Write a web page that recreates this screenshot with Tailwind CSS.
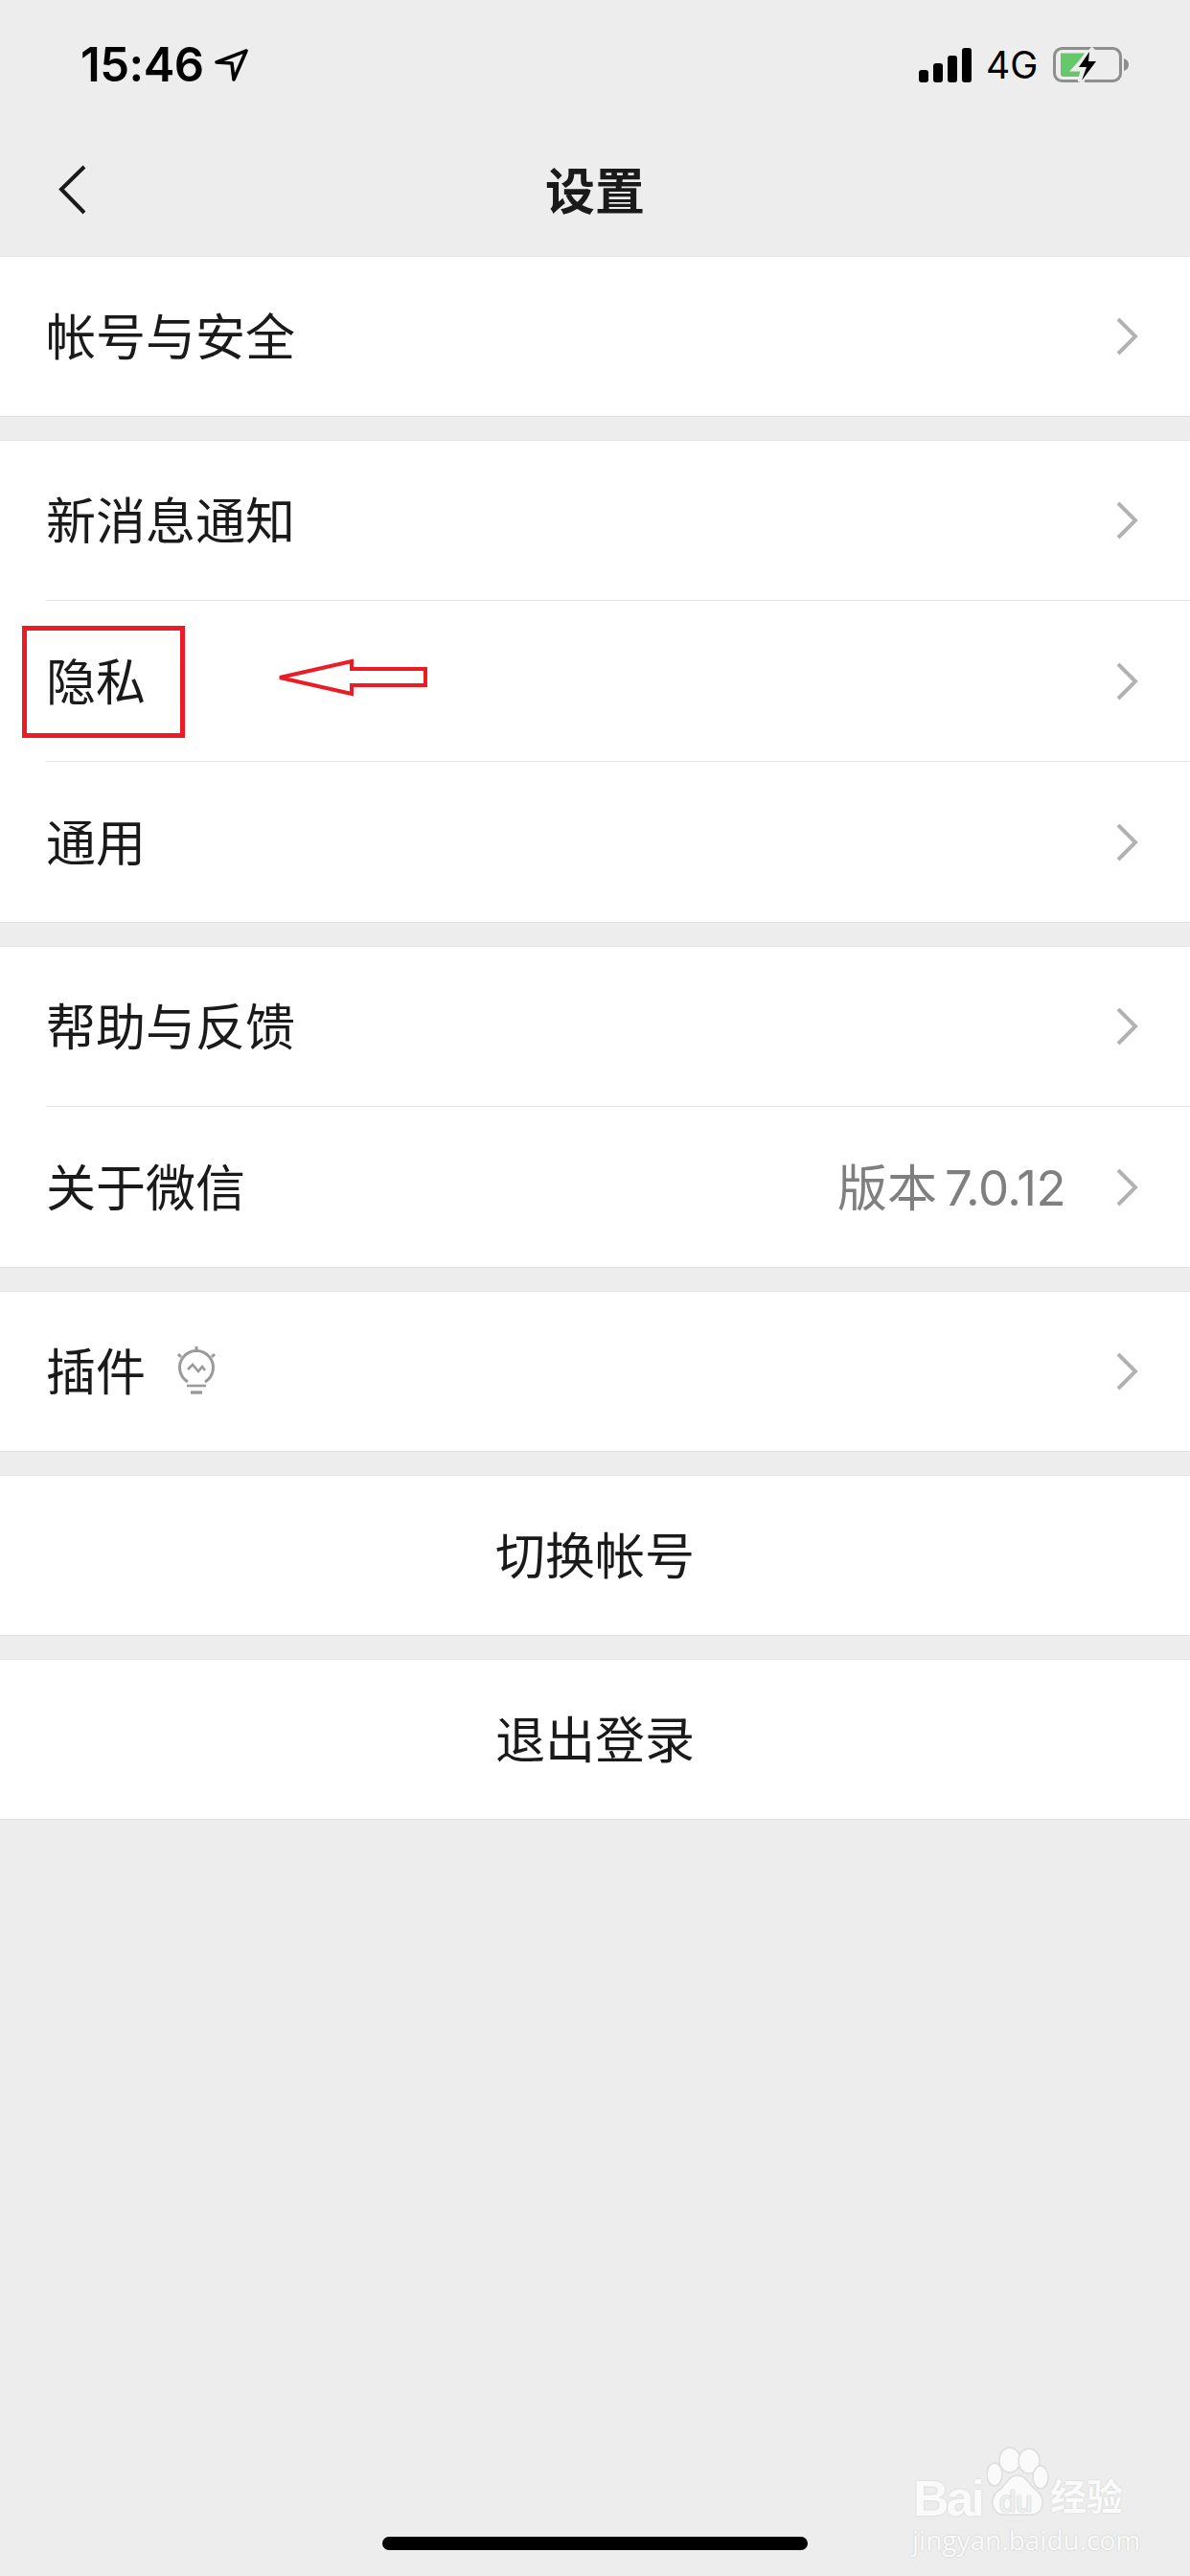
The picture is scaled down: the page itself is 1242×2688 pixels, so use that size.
<!DOCTYPE html>
<html lang="zh-CN">

<head>
    <meta charset="UTF-8">
    <meta name="viewport" content="width=device-width, initial-scale=1.0">
    <title>设置</title>
    <script src="https://cdn.jsdelivr.net/npm/@tailwindcss/browser@4"></script>
</head>

<body class="bg-[#ededed] text-[#1a1a1a] font-['Inter','Noto_Sans_CJK_SC',sans-serif]">
    <div class="relative w-[1242px] h-[2688px] overflow-hidden">

        <!-- Status bar -->
        <div class="h-[134px] flex items-start justify-between pt-[44px] pl-[84px] pr-[63px]">
            <div class="flex items-center gap-[11px] h-[48px]">
                <span class="text-[49px] leading-[48px] font-semibold text-black tracking-[-0.5px]">15:46</span>
                <svg class="w-[35px] h-[36px]" viewBox="0 0 35 36" fill="none" stroke="#000" stroke-width="3.6" stroke-linejoin="round">
                    <path d="M2 15 L33 3 L20 33 L18 16 Z" />
                </svg>
            </div>
            <div class="flex items-center h-[48px]">
                <svg class="w-[56px] h-[36px]" viewBox="0 0 56 36" fill="#000">
                    <rect x="0" y="23" width="10" height="13" rx="3" />
                    <rect x="15" y="16" width="10" height="20" rx="3" />
                    <rect x="30" y="8" width="10" height="28" rx="3" />
                    <rect x="45" y="0" width="10" height="36" rx="3" />
                </svg>
                <span class="ml-[14px] w-[54px] text-[39px] leading-[48px] text-black">4G</span>
                <svg class="ml-[16px] w-[80px] h-[38px]" viewBox="0 0 80 38" fill="none">
                    <rect x="1.5" y="1.5" width="69" height="34" rx="8" stroke="#8e8e8e" stroke-width="3" />
                    <path d="M74 12 C77 13 79 15 79 18.500 C79 22 77 24 74 25 Z" fill="#8e8e8e" />
                    <path d="M8 6.500 H33 L22 22 H30 L28 31 H11 Q8 31 8 28 Z" fill="#65c86a" />
                    <path d="M43 2 L25 22 H33 L29 37" stroke="#ededed" stroke-width="7" />
                    <path d="M38 5 L27 21 H35 L30 35 L45 15 H37 Z" fill="#000" />
                </svg>
            </div>
        </div>

        <!-- Nav bar -->
        <div class="relative h-[134px] flex items-center justify-center border-b border-[#e2e2e2]">
            <svg class="absolute left-[60px] top-[37px] w-[32px] h-[54px]" viewBox="0 0 32 54" fill="none" stroke="#1a1a1a" stroke-width="4">
                <path d="M28 3 L4 26.500 L28 51" />
            </svg>
            <span class="text-[52px] font-semibold leading-none">设置</span>
        </div>

        <!-- Settings list -->
        <div class="flex flex-col gap-[24px]">
            <div class="bg-white border-b border-[#e2e2e2]">
                <div class="h-[166px] pl-[48px] pr-[54px] flex items-center justify-between">
                    <span class="text-[52px] pt-[4px]">帐号与安全</span>
                    <svg class="w-[24px] h-[40px]" viewBox="0 0 24 40" fill="none" stroke="#b2b2b2" stroke-width="4"><path d="M3 2 L21 20 L3 38" /></svg>
                </div>
            </div>

            <div class="bg-white border-y border-[#e2e2e2]">
                <div class="h-[166px] pl-[48px] pr-[54px] flex items-center justify-between">
                    <span class="text-[52px] pt-[4px]">新消息通知</span>
                    <svg class="w-[24px] h-[40px]" viewBox="0 0 24 40" fill="none" stroke="#b2b2b2" stroke-width="4"><path d="M3 2 L21 20 L3 38" /></svg>
                </div>
                <div class="ml-[48px] h-px bg-[#e5e5e5]"></div>
                <div class="h-[167px] pl-[48px] pr-[54px] flex items-center justify-between">
                    <span class="text-[52px] pt-[4px]">隐私</span>
                    <svg class="w-[24px] h-[40px]" viewBox="0 0 24 40" fill="none" stroke="#b2b2b2" stroke-width="4"><path d="M3 2 L21 20 L3 38" /></svg>
                </div>
                <div class="ml-[48px] h-px bg-[#e5e5e5]"></div>
                <div class="h-[167px] pl-[48px] pr-[54px] flex items-center justify-between">
                    <span class="text-[52px] pt-[4px]">通用</span>
                    <svg class="w-[24px] h-[40px]" viewBox="0 0 24 40" fill="none" stroke="#b2b2b2" stroke-width="4"><path d="M3 2 L21 20 L3 38" /></svg>
                </div>
            </div>

            <div class="bg-white border-y border-[#e2e2e2]">
                <div class="h-[166px] pl-[48px] pr-[54px] flex items-center justify-between">
                    <span class="text-[52px] pt-[4px]">帮助与反馈</span>
                    <svg class="w-[24px] h-[40px]" viewBox="0 0 24 40" fill="none" stroke="#b2b2b2" stroke-width="4"><path d="M3 2 L21 20 L3 38" /></svg>
                </div>
                <div class="ml-[48px] h-px bg-[#e5e5e5]"></div>
                <div class="h-[167px] pl-[48px] pr-[54px] flex items-center justify-between">
                    <span class="text-[52px] pt-[4px]">关于微信</span>
                    <div class="flex items-center gap-[52px]">
                        <div class="flex items-center gap-[8px] text-[#7f7f7f] pt-[4px]">
                            <span class="text-[52px]">版本</span>
                            <span class="text-[51px] tracking-[-0.5px]">7.0.12</span>
                        </div>
                        <svg class="w-[24px] h-[40px]" viewBox="0 0 24 40" fill="none" stroke="#b2b2b2" stroke-width="4"><path d="M3 2 L21 20 L3 38" /></svg>
                    </div>
                </div>
            </div>

            <div class="bg-white border-y border-[#e2e2e2]">
                <div class="h-[166px] pl-[48px] pr-[54px] flex items-center justify-between">
                    <div class="flex items-center gap-[31px]">
                        <span class="text-[52px] pt-[4px]">插件</span>
                        <svg class="w-[44px] h-[52px]" viewBox="0 0 44 52" fill="none" stroke="#9a9a9a" stroke-width="3">
                            <path d="M22 0 V6 M3 8 L6 11 M41 8 L38 11" />
                            <path d="M13 37 A17.500 17.500 0 1 1 31 37" />
                            <path d="M13 24 L18 19 L24 26 L28 21 L31 25" stroke-width="2.600" />
                            <path d="M12 41 H32" stroke-width="2.600" />
                            <path d="M16 48 H28" stroke-width="3.400" />
                        </svg>
                    </div>
                    <svg class="w-[24px] h-[40px]" viewBox="0 0 24 40" fill="none" stroke="#b2b2b2" stroke-width="4"><path d="M3 2 L21 20 L3 38" /></svg>
                </div>
            </div>

            <div class="bg-white border-y border-[#e2e2e2]">
                <div class="h-[166px] flex items-center justify-center">
                    <span class="text-[52px] pt-[4px]">切换帐号</span>
                </div>
            </div>

            <div class="bg-white border-y border-[#e2e2e2]">
                <div class="h-[166px] flex items-center justify-center">
                    <span class="text-[52px] pt-[4px]">退出登录</span>
                </div>
            </div>
        </div>

        <!-- Red annotation over the 隐私 row -->
        <div class="absolute left-[23px] top-[653px] w-[170px] h-[117px] border-[5px] border-[#ed1c24]"></div>
        <svg class="absolute left-[280px] top-[680px] w-[175px] h-[52px]" viewBox="280 680 175 52" fill="none" stroke="#ed1c24" stroke-width="4">
            <path d="M292 707 L367 690 V698 H444 V715 H367 V724 Z" />
        </svg>

        <!-- Home indicator -->
        <div class="absolute left-[399px] top-[2647px] w-[444px] h-[14px] rounded-full bg-black"></div>

        <!-- Watermark -->
        <svg class="absolute left-[1030px] top-[2552px] w-[66px] h-[76px]" viewBox="0 0 66 76" fill="#fafafa" stroke="#dddddd" stroke-width="1.500">
            <ellipse cx="24" cy="15" rx="11" ry="13" />
            <ellipse cx="44" cy="16" rx="11" ry="13" />
            <ellipse cx="8" cy="30" rx="8" ry="12" />
            <ellipse cx="56" cy="33" rx="8" ry="12" />
            <path d="M32 31 C42 31 44 42 52 47 C62 54 60 72 46 72 C38 72 26 72 18 72 C4 72 2 54 12 47 C20 42 22 31 32 31 Z" />
        </svg>
        <div class="absolute left-[953px] top-[2579px] w-[76px] text-[52px] leading-[56px] font-bold tracking-[-3px] text-[#fafafa] font-['Liberation_Sans',sans-serif] [text-shadow:0_0_2px_#c8c8c8]">Bai</div>
        <div class="absolute left-[1043px] top-[2594px] w-[44px] text-[31px] leading-[34px] text-[#f0f0f0] font-['Liberation_Sans',sans-serif] [text-shadow:0_0_2px_#b0b0b0]">du</div>
        <div class="absolute left-[1096px] top-[2581px] w-[80px] text-[38px] leading-[48px] font-bold text-[#fafafa] [text-shadow:0_0_2px_#c8c8c8]">经验</div>
        <div class="absolute left-[952px] top-[2636px] w-[226px] text-[28px] leading-[28px] text-[#fafafa] font-['Open_Sans',sans-serif] whitespace-nowrap [text-shadow:0_0_2px_#c0c0c0]">jingyan.baidu.com</div>
    </div>
</body>

</html>
